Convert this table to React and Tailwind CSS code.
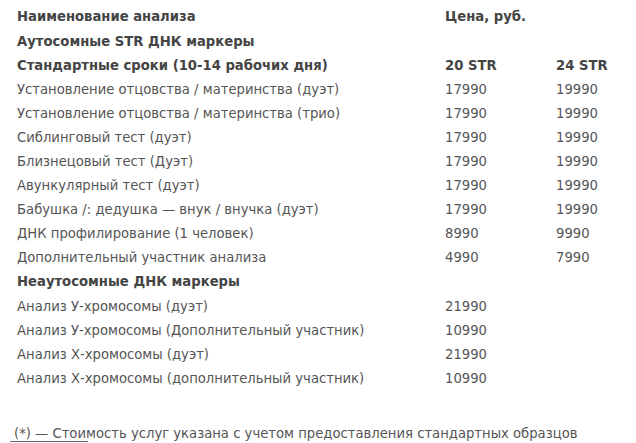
import React from "react";

const rows = [
  { t: "Наименование анализа", a: "Цена, руб.", b: "", bold: true },
  { t: "Аутосомные STR ДНК маркеры", a: "", b: "", bold: true },
  { t: "Стандартные сроки (10-14 рабочих дня)", a: "20 STR", b: "24 STR", bold: true },
  { t: "Установление отцовства / материнства (дуэт)", a: "17990", b: "19990" },
  { t: "Установление отцовства / материнства (трио)", a: "17990", b: "19990" },
  { t: "Сиблинговый тест (дуэт)", a: "17990", b: "19990" },
  { t: "Близнецовый тест (Дуэт)", a: "17990", b: "19990" },
  { t: "Авункулярный тест (дуэт)", a: "17990", b: "19990" },
  { t: "Бабушка /: дедушка — внук / внучка (дуэт)", a: "17990", b: "19990" },
  { t: "ДНК профилирование (1 человек)", a: "8990", b: "9990" },
  { t: "Дополнительный участник анализа", a: "4990", b: "7990" },
  { t: "Неаутосомные ДНК маркеры", a: "", b: "", bold: true },
  { t: "Анализ У-хромосомы (дуэт)", a: "21990", b: "" },
  { t: "Анализ У-хромосомы (Дополнительный участник)", a: "10990", b: "" },
  { t: "Анализ Х-хромосомы (дуэт)", a: "21990", b: "" },
  { t: "Анализ Х-хромосомы (дополнительный участник)", a: "10990", b: "" },
];

export default function App() {
  return (
    <div
      className="w-[636px] h-[443px] bg-white overflow-hidden text-[13.2px] text-[#555]"
      style={{ fontFamily: '"DejaVu Sans", Verdana, sans-serif' }}
    >
      <div className="pt-[5px] pl-[17px]">
        {rows.map((r, i) => (
          <div
            key={i}
            className={`grid grid-cols-[428px_111px_1fr] h-[24.1px] items-center leading-none ${r.bold ? "font-bold text-[#444]" : ""}`}
          >
            <span className="whitespace-nowrap">{r.t}</span>
            <span>{r.a}</span>
            <span>{r.b}</span>
          </div>
        ))}
      </div>
      <div className="mt-[36px] pl-[14px] relative h-[16px] leading-none">
        <span className="whitespace-nowrap">(*) — Стоимость услуг указана с учетом предоставления стандартных образцов</span>
        <div className="absolute left-[10px] top-[14px] w-[78px] h-px bg-[#666]" />
      </div>
    </div>
  );
}
